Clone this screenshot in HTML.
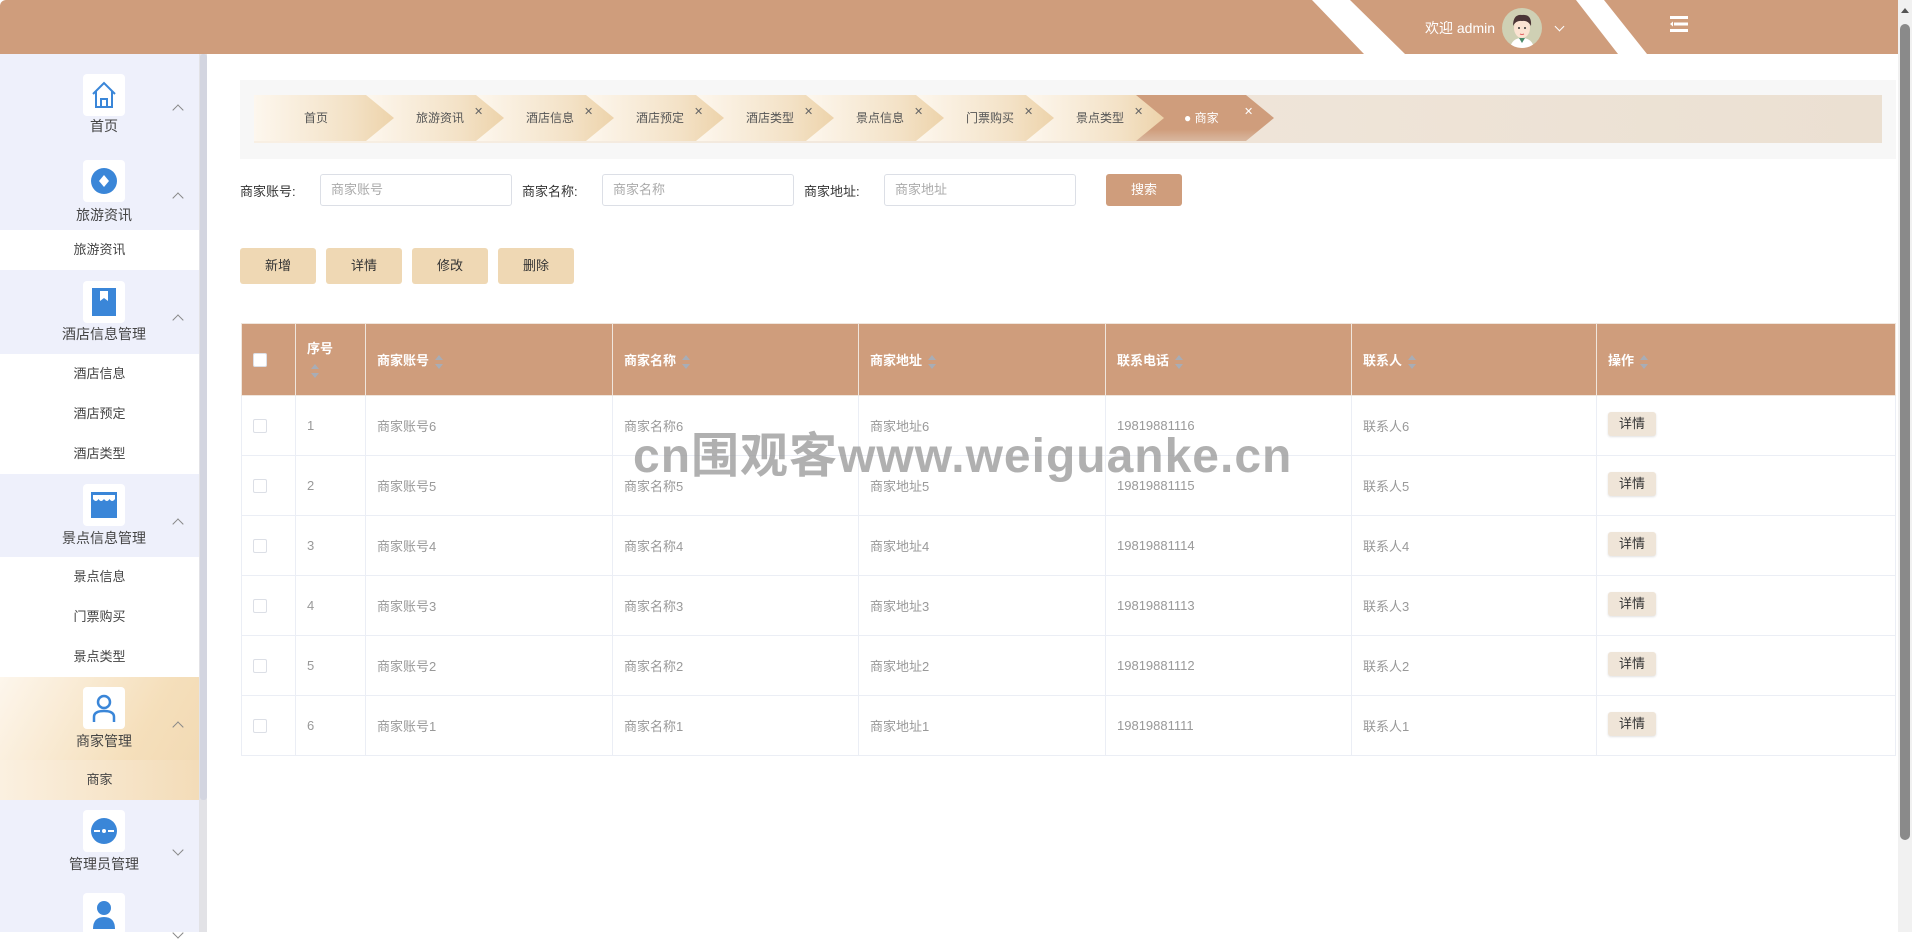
<!DOCTYPE html>
<html><head><meta charset="utf-8"><style>
*{box-sizing:border-box;margin:0;padding:0}
body{width:1912px;height:932px;overflow:hidden;background:#fff;font-family:"Liberation Sans","Noto Sans CJK SC",sans-serif;font-size:13px;color:#333;position:relative}
.abs{position:absolute}
#hdr{left:0;top:0;width:1898px;height:54px;background:#cf9d7c;border-top-left-radius:6px}
.stripe{top:0;height:54px;background:#fff}
#side{left:0;top:54px;width:199px;height:878px;background:#eef0fb}
#strack{left:199px;top:54px;width:8px;height:878px;background:#e2e2e6}
#sthumb{left:200px;top:54px;width:7px;height:746px;background:#d3d5e0;border-radius:3px}
.blk{position:absolute;left:0;width:199px}
.ibox{position:absolute;left:83px;width:42px;height:42px;background:#fff;border-radius:4px;display:flex;align-items:center;justify-content:center}
.lbl{position:absolute;left:0;width:208px;text-align:center;font-size:14px;color:#444}
.chev{position:absolute;left:174px;width:8px;height:8px;border-left:1px solid #888;border-top:1px solid #888}
.up{transform:rotate(45deg)}
.dn{transform:rotate(225deg)}
.sub{position:absolute;left:0;width:199px;height:40px;background:#fff;text-align:center;line-height:40px;font-size:13px;color:#444}
#crumb{left:240px;top:80px;width:1656px;height:79px;background:#f7f7f7}
#bar{left:254px;top:95px;width:1628px;height:48px;background:linear-gradient(90deg,#f8efe3,#f1e7dc 40%,#ebe0d2)}
.tab{position:absolute;top:95px;height:46px;width:138px;clip-path:polygon(0 0,110px 0,138px 50%,110px 100%,0 100%);background:linear-gradient(90deg,#fdf7ee,#f3e1c5 70%,#edd3aa);padding-left:50px;line-height:46px;font-size:12px;color:#555}
.tab i{font-style:normal;position:absolute;left:108px;top:-6px;font-size:11px;color:#666}
.lab{position:absolute;top:181px;font-size:13px;color:#333}
.inp{position:absolute;top:174px;height:32px;width:192px;border:1px solid #dcdfe6;border-radius:3px;padding-left:10px;line-height:30px;color:#aaa;font-size:13px}
.btn{position:absolute;top:248px;height:36px;width:76px;background:#efd8b4;border-radius:3px;text-align:center;line-height:36px;font-size:13px;color:#333}
#tbl{left:241px;top:323px;width:1655px;border:1px solid #ebeef5;border-collapse:collapse;table-layout:fixed}
#tbl td,#tbl th{border:1px solid #ebeef5;text-align:left;padding-left:11px;font-size:13px;color:#999;font-weight:normal}
#tbl th{background:#cf9d7c;color:#fff;font-weight:bold;height:72px;border-color:#f0e6dd}
#tbl td{height:60px}
.sort{display:inline-block;width:8px;height:14px;vertical-align:middle;margin-left:6px;position:relative}
.sort:before{content:"";position:absolute;left:0;top:0;border:4px solid transparent;border-bottom:5px solid #a8adb6;border-top:0}
.sort:after{content:"";position:absolute;left:0;bottom:0;border:4px solid transparent;border-top:5px solid #a8adb6;border-bottom:0}
.cb{display:inline-block;width:14px;height:14px;border:1px solid #dcdfe6;border-radius:2px;background:#fff;vertical-align:middle}
.xq{display:inline-block;width:48px;height:24px;background:#efe5d8;border-radius:3px;color:#333;text-align:center;line-height:24px;font-size:13px;box-shadow:0 1px 2px rgba(0,0,0,.12);margin-top:-12px}
#wm{left:633px;top:416px;font-size:48px;font-weight:bold;color:rgba(150,150,150,.75);white-space:nowrap;letter-spacing:1px}
</style></head><body>
<div id="hdr" class="abs"></div>
<div class="abs stripe" style="left:1300px;width:110px;clip-path:polygon(12px 0,50px 0,105px 54px,64px 54px)"></div>
<div class="abs stripe" style="left:1570px;width:80px;clip-path:polygon(6px 0,34px 0,77px 54px,48px 54px)"></div>
<div class="abs" style="left:1425px;top:18px;color:#fff;font-size:14px">欢迎 admin</div>
<div class="abs" style="left:1502px;top:8px;width:40px;height:40px;border-radius:50%;background:#cfd0b4;overflow:hidden">
<svg width="40" height="40" viewBox="0 0 40 40"><path d="M8 40 Q10 30 20 30 Q30 30 32 40Z" fill="#fff"/><path d="M17 30 L20 35 L23 30Z" fill="#4a8a6a"/><ellipse cx="20" cy="20" rx="8" ry="10" fill="#fbe3d2"/><path d="M11 18 Q11 6 20 7 Q30 6 29 18 Q26 12 20 13 Q14 12 11 18Z" fill="#4b3536"/><circle cx="17" cy="20" r="1" fill="#333"/><circle cx="23" cy="20" r="1" fill="#333"/><path d="M18 26 Q20 27 22 26" stroke="#e06060" fill="none"/></svg></div>
<div class="abs" style="left:1556px;top:23px;width:7px;height:7px;border-right:1px solid #fff;border-bottom:1px solid #fff;transform:rotate(45deg)"></div>
<svg class="abs" style="left:1670px;top:16px" width="18" height="16" viewBox="0 0 18 16"><rect x="0" y="0" width="18" height="3" fill="#fff"/><rect x="4" y="6.5" width="14" height="3" fill="#fff"/><rect x="0" y="13" width="18" height="3" fill="#fff"/><path d="M0 8 L3 5.5 L3 10.5Z" fill="#fff"/></svg>
<div class="abs" style="left:1898px;top:0;width:14px;height:932px;background:#f1f1f1"></div>
<div class="abs" style="left:1900px;top:24px;width:10px;height:816px;background:#8a8a8a;border-radius:5px"></div>
<div class="abs" style="left:1901px;top:8px;border:4px solid transparent;border-bottom:5px solid #555;border-top:0"></div>

<div id="side" class="abs">
 <div class="blk" style="top:0;height:95px">
  <div class="ibox" style="top:20px"><svg width="28" height="30" viewBox="0 0 28 30"><path d="M3 14 L14 3 L25 14 M6 11 V27 H22 V11 M11 27 V19 H17 V27" fill="none" stroke="#3a86d8" stroke-width="2"/></svg></div>
  <div class="lbl" style="top:62px">首页</div><div class="chev up" style="top:52px"></div>
 </div>
 <div class="blk" style="top:95px;height:82px">
  <div class="ibox" style="top:11px"><svg width="28" height="28"><circle cx="14" cy="14" r="13" fill="#3a86d8"/><path d="M14 8 L19 14 L14 20 L9 14Z" fill="#fff"/></svg></div>
  <div class="lbl" style="top:56px">旅游资讯</div><div class="chev up" style="top:45px"></div>
 </div>
 <div class="sub" style="top:176px">旅游资讯</div>
 <div class="blk" style="top:216px;height:84px">
  <div class="ibox" style="top:11px"><svg width="26" height="28"><rect x="1" y="0" width="24" height="28" fill="#3a86d8"/><path d="M9 3 H17 V13 L13 10 L9 13Z" fill="#fff"/></svg></div>
  <div class="lbl" style="top:54px">酒店信息管理</div><div class="chev up" style="top:46px"></div>
 </div>
 <div class="sub" style="top:300px">酒店信息</div>
 <div class="sub" style="top:340px">酒店预定</div>
 <div class="sub" style="top:380px">酒店类型</div>
 <div class="blk" style="top:420px;height:83px">
  <div class="ibox" style="top:10px"><svg width="28" height="28"><rect x="1" y="1" width="26" height="26" fill="#3a86d8"/><path d="M3 4 H25 V8 Q22 12 19.5 8 Q17 12 14 8 Q11 12 8.5 8 Q6 12 3 8Z" fill="#fff"/></svg></div>
  <div class="lbl" style="top:54px">景点信息管理</div><div class="chev up" style="top:46px"></div>
 </div>
 <div class="sub" style="top:503px">景点信息</div>
 <div class="sub" style="top:543px">门票购买</div>
 <div class="sub" style="top:583px">景点类型</div>
 <div class="blk" style="top:623px;height:83px;background:linear-gradient(120deg,#fdf6ec,#f5dfbb 70%,#f2dab4)">
  <div class="ibox" style="top:10px"><svg width="26" height="30"><circle cx="13" cy="9" r="6" fill="none" stroke="#3a86d8" stroke-width="2.5"/><path d="M3 29 V24 Q3 18 13 18 Q23 18 23 24 V29" fill="none" stroke="#3a86d8" stroke-width="2.5"/></svg></div>
  <div class="lbl" style="top:54px">商家管理</div><div class="chev up" style="top:46px"></div>
 </div>
 <div class="sub" style="top:706px;background:linear-gradient(90deg,#fbf0e0,#f3dcb8)">商家</div>
 <div class="blk" style="top:746px;height:83px">
  <div class="ibox" style="top:10px"><svg width="28" height="28"><circle cx="14" cy="14" r="13" fill="#3a86d8"/><rect x="4" y="13" width="6" height="2" fill="#fff"/><rect x="18" y="13" width="6" height="2" fill="#fff"/><circle cx="14" cy="14" r="2" fill="#fff"/></svg></div>
  <div class="lbl" style="top:54px">管理员管理</div><div class="chev dn" style="top:46px"></div>
 </div>
 <div class="blk" style="top:829px;height:60px">
  <div class="ibox" style="top:10px"><svg width="26" height="30"><circle cx="13" cy="9" r="7" fill="#3a86d8"/><path d="M2 30 Q2 18 13 18 Q24 18 24 30Z" fill="#3a86d8"/></svg></div>
  <div class="chev dn" style="top:46px"></div>
 </div>
</div>
<div id="strack" class="abs"></div><div id="sthumb" class="abs"></div>

<div id="crumb" class="abs"></div>
<div id="bar" class="abs"></div>
<div class="tab" style="left:254px;z-index:20;width:140px;clip-path:polygon(0 0,112px 0,140px 50%,112px 100%,0 100%)">首页</div>
<div class="tab" style="left:366px;z-index:19">旅游资讯<i>✕</i></div>
<div class="tab" style="left:476px;z-index:18">酒店信息<i>✕</i></div>
<div class="tab" style="left:586px;z-index:17">酒店预定<i>✕</i></div>
<div class="tab" style="left:696px;z-index:16">酒店类型<i>✕</i></div>
<div class="tab" style="left:806px;z-index:15">景点信息<i>✕</i></div>
<div class="tab" style="left:916px;z-index:14">门票购买<i>✕</i></div>
<div class="tab" style="left:1026px;z-index:13">景点类型<i>✕</i></div>
<div class="tab" style="left:1136px;z-index:12;background:linear-gradient(180deg,#cf9d7c 75%,#d9b8a0);color:#fff;padding-left:48px">● 商家<i style="color:#fff">✕</i></div>

<div class="lab" style="left:240px">商家账号:</div><div class="inp" style="left:320px">商家账号</div>
<div class="lab" style="left:522px">商家名称:</div><div class="inp" style="left:602px">商家名称</div>
<div class="lab" style="left:804px">商家地址:</div><div class="inp" style="left:884px">商家地址</div>
<div class="abs" style="left:1106px;top:174px;width:76px;height:32px;background:#cf9d7c;border-radius:3px;color:#fff;text-align:center;line-height:32px;font-size:13px">搜索</div>
<div class="btn" style="left:240px">新增</div><div class="btn" style="left:326px">详情</div><div class="btn" style="left:412px">修改</div><div class="btn" style="left:498px">删除</div>

<table id="tbl" class="abs">
<colgroup><col style="width:54px"><col style="width:70px"><col style="width:247px"><col style="width:246px"><col style="width:247px"><col style="width:246px"><col style="width:245px"><col></colgroup>
<tr><th><span class="cb"></span></th><th style="line-height:22px">序号<br><span class="sort" style="margin-left:4px"></span></th><th>商家账号<span class="sort"></span></th><th>商家名称<span class="sort"></span></th><th>商家地址<span class="sort"></span></th><th>联系电话<span class="sort"></span></th><th>联系人<span class="sort"></span></th><th>操作<span class="sort"></span></th></tr>
<tr><td><span class="cb"></span></td><td>1</td><td>商家账号6</td><td>商家名称6</td><td>商家地址6</td><td>19819881116</td><td>联系人6</td><td><span class="xq">详情</span></td></tr>
<tr><td><span class="cb"></span></td><td>2</td><td>商家账号5</td><td>商家名称5</td><td>商家地址5</td><td>19819881115</td><td>联系人5</td><td><span class="xq">详情</span></td></tr>
<tr><td><span class="cb"></span></td><td>3</td><td>商家账号4</td><td>商家名称4</td><td>商家地址4</td><td>19819881114</td><td>联系人4</td><td><span class="xq">详情</span></td></tr>
<tr><td><span class="cb"></span></td><td>4</td><td>商家账号3</td><td>商家名称3</td><td>商家地址3</td><td>19819881113</td><td>联系人3</td><td><span class="xq">详情</span></td></tr>
<tr><td><span class="cb"></span></td><td>5</td><td>商家账号2</td><td>商家名称2</td><td>商家地址2</td><td>19819881112</td><td>联系人2</td><td><span class="xq">详情</span></td></tr>
<tr><td><span class="cb"></span></td><td>6</td><td>商家账号1</td><td>商家名称1</td><td>商家地址1</td><td>19819881111</td><td>联系人1</td><td><span class="xq">详情</span></td></tr>
</table>
<div id="wm" class="abs">cn围观客www.weiguanke.cn</div>
</body></html>
